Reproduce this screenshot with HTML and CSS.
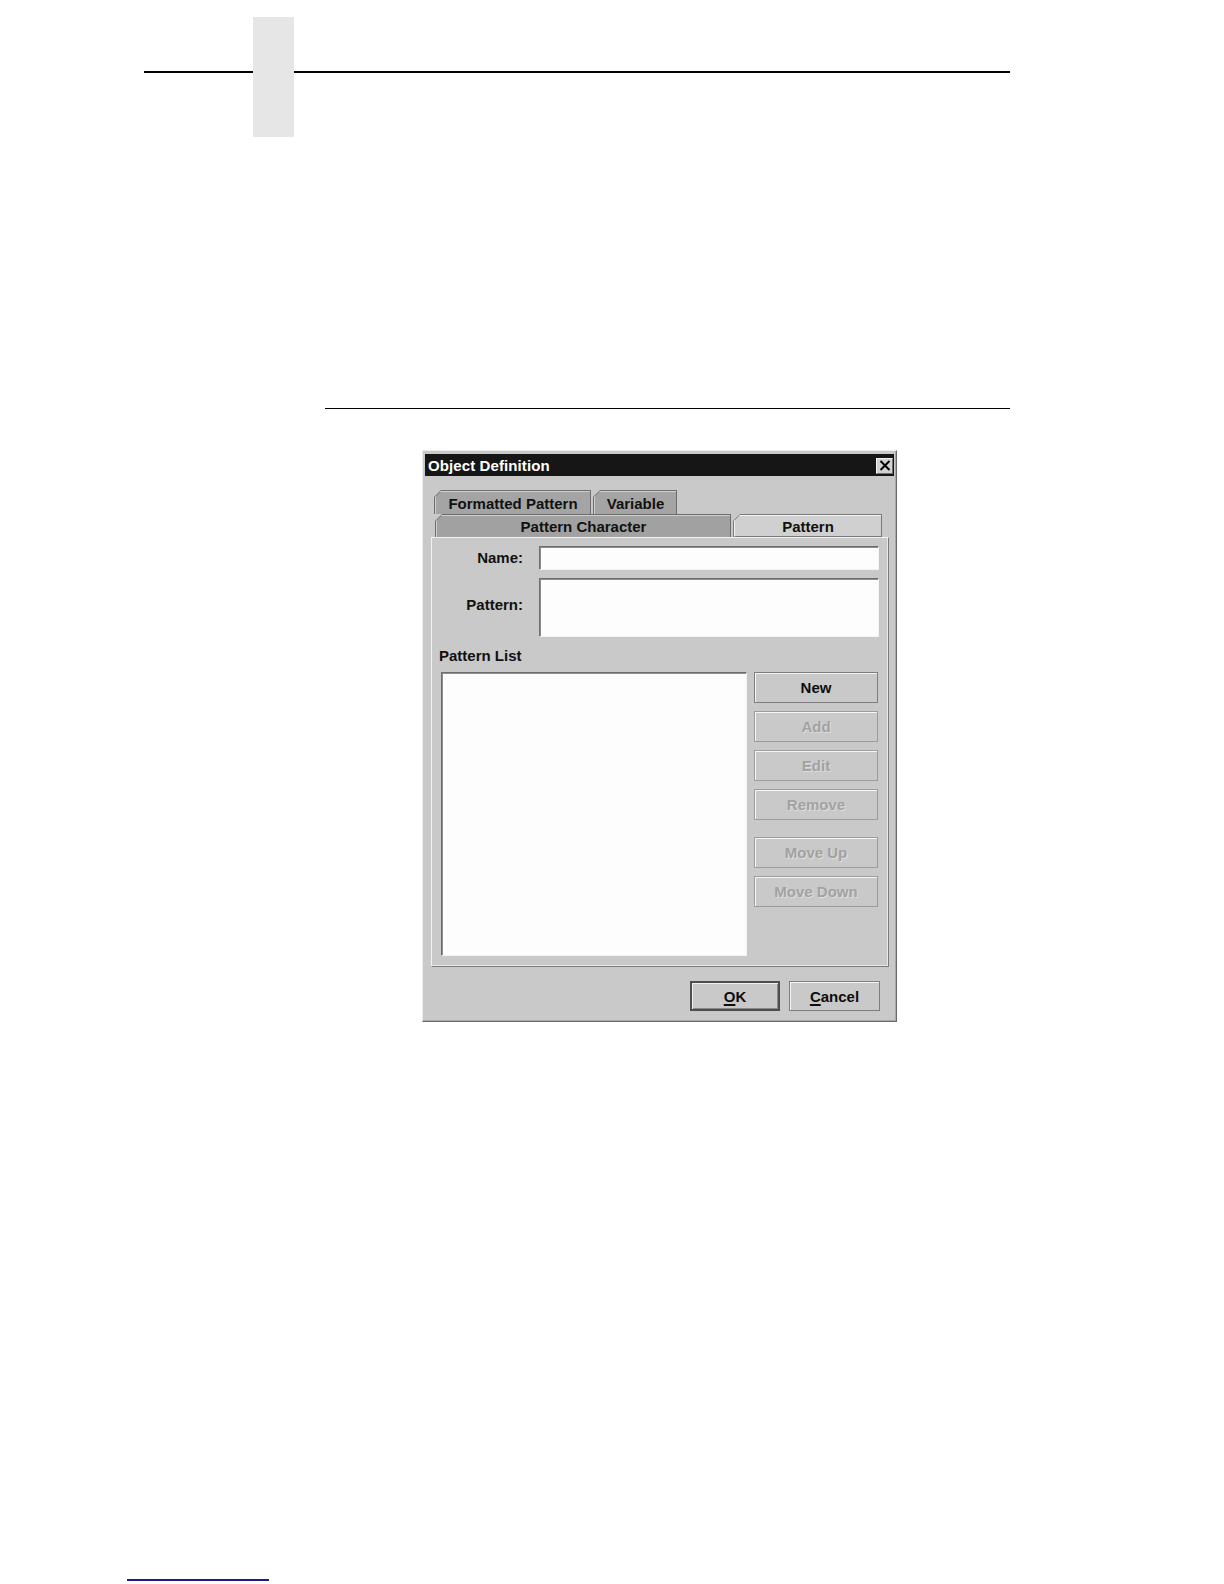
FILE: index.html
```html
<!DOCTYPE html>
<html>
<head>
<meta charset="utf-8">
<title>Object Definition</title>
<link rel="stylesheet" href="styles.css">
</head>
<body>
<div class="page">
  <div class="header">
    <div class="hl hl-left"></div>
    <div class="thumb"></div>
    <div class="hl hl-right"></div>
  </div>
  <div class="rule"></div>

  <div class="dialog">
    <div class="titlebar">
      <span class="title">Object Definition</span>
      <span class="close">
        <svg width="12" height="11" viewBox="0 0 12 11"><path d="M1.5 1 L10.5 10 M10.5 1 L1.5 10" stroke="#000" stroke-width="2" fill="none"/></svg>
      </span>
    </div>

    <div class="tabs">
      <div class="tabrow row1">
        <div class="tab back tab-fp"><div class="tab-in">Formatted Pattern</div></div>
        <div class="tab back tab-var"><div class="tab-in">Variable</div></div>
      </div>
      <div class="tabrow row2">
        <div class="tab back tab-pc"><div class="tab-in">Pattern Character</div></div>
        <div class="tab sel tab-pat"><div class="tab-in">Pattern</div></div>
      </div>
    </div>

    <div class="panel">
      <div class="form">
        <div class="lbl">Name:</div>
        <div class="field field-name"></div>
        <div class="lbl">Pattern:</div>
        <div class="field field-area"></div>
      </div>
      <div class="list-label">Pattern List</div>
      <div class="list-row">
        <div class="list"></div>
        <div class="btns">
          <div class="btn">New</div>
          <div class="btn disabled">Add</div>
          <div class="btn disabled">Edit</div>
          <div class="btn disabled">Remove</div>
          <div class="btn disabled spaced">Move Up</div>
          <div class="btn disabled">Move Down</div>
        </div>
      </div>
    </div>

    <div class="footer">
      <div class="btn fbtn default"><u>O</u>K</div>
      <div class="btn fbtn cancel"><u>C</u>ancel</div>
    </div>
  </div>

  <div class="footline"></div>
</div>
</body>
</html>
```

FILE: styles.css
```css
html, body {
  margin: 0;
  padding: 0;
  background: #ffffff;
}

.page {
  width: 1224px;
  height: 1584px;
  overflow: hidden;
  font-family: "Liberation Sans", Arial, sans-serif;
}

/* ---------- page header ---------- */
.header {
  display: flex;
  align-items: flex-start;
  padding-top: 17px;
  margin-left: 144px;
  width: 866px;
}
.hl {
  height: 2px;
  margin-top: 54px;
  background: #000;
}
.hl-left { width: 109px; }
.hl-right { flex: 1; }
.thumb {
  width: 41px;
  height: 120px;
  background: #e6e6e6;
}

.rule {
  margin-top: 271px;
  margin-left: 325px;
  width: 685px;
  height: 1px;
  background: #000;
}

/* ---------- dialog ---------- */
.dialog {
  box-sizing: border-box;
  margin-top: 41px;
  margin-left: 422px;
  width: 475px;
  height: 572px;
  padding: 3px 2px 0 2px;
  background: #c9c9c9;
  border: 1px solid;
  border-color: #ececec #6a6a6a #6a6a6a #ececec;
  box-shadow: inset -1px -1px 0 #a8a8a8;
  font-size: 15px;
  font-weight: bold;
  color: #111;
}

.titlebar {
  height: 22px;
  background: #161616;
  display: flex;
  align-items: center;
  justify-content: space-between;
  padding: 0 1px 0 3px;
}
.title {
  color: #ffffff;
  font-size: 15px;
  font-weight: bold;
  letter-spacing: 0.1px;
}
.close {
  box-sizing: border-box;
  width: 17px;
  height: 16px;
  margin-top: 1px;
  background: #d2d2d2;
  border: 1px solid;
  border-color: #f4f4f4 #707070 #707070 #f4f4f4;
  display: flex;
  align-items: center;
  justify-content: center;
}

/* ---------- tabs ---------- */
.tabs {
  margin-top: 14px;
}
.tabrow {
  display: flex;
  gap: 2px;
}
.row1 {
  margin-left: 9px;
  height: 24px;
}
.row2 {
  margin-left: 10px;
  height: 23px;
}
.tab {
  box-sizing: border-box;
  height: 100%;
  padding: 1px 1px 0 1px;
  background: #6c6c6c;
  clip-path: polygon(0 7px, 7px 0, 100% 0, 100% 100%, 0 100%);
}
.tab-in {
  box-sizing: border-box;
  height: 100%;
  display: flex;
  align-items: center;
  justify-content: center;
  clip-path: polygon(0 6px, 6px 0, 100% 0, 100% 100%, 0 100%);
  border-top: 1px solid #cfcfcf;
  border-left: 1px solid #cfcfcf;
  color: #111;
  white-space: nowrap;
}
.back .tab-in {
  background: #a4a4a4;
}
.tab-pc .tab-in {
  background: #a1a1a1;
}
.sel {
  background: #7a7a7a;
}
.sel .tab-in {
  background: #d0d0d0;
  border-top-color: #f4f4f4;
  border-left-color: #f4f4f4;
  border-bottom: 1px solid #7a7a7a;
}
.tab-fp  { width: 157px; }
.tab-var { width: 84px; }
.tab-pc  { width: 296px; }
.tab-pat { width: 149px; }

/* ---------- panel ---------- */
.panel {
  box-sizing: border-box;
  margin-left: 6px;
  width: 458px;
  height: 430px;
  padding: 8px 9px 10px 7px;
  border: 1px solid;
  border-color: #f2f2f2 #7a7a7a #7a7a7a #f2f2f2;
  box-shadow: inset -1px -1px 0 #e8e8e8;
}

.form {
  display: grid;
  grid-template-columns: 84px 1fr;
  grid-template-rows: 24px 59px;
  column-gap: 16px;
  row-gap: 8px;
}
.lbl {
  text-align: right;
  align-self: center;
  line-height: 18px;
}
.lbl:nth-of-type(3) {
  margin-top: -6px;
}
.field {
  box-sizing: border-box;
  background: #fdfdfd;
  border: 1px solid;
  border-color: #6e6e6e #f4f4f4 #f4f4f4 #6e6e6e;
  box-shadow: 1px 1px 0 #8e8e8e inset;
}

.list-label {
  margin-top: 10px;
  line-height: 18px;
  height: 18px;
}

.list-row {
  display: flex;
  gap: 7px;
  margin-top: 7px;
}
.list {
  box-sizing: border-box;
  margin-left: 2px;
  width: 306px;
  height: 284px;
  background: #fdfdfd;
  border: 1px solid;
  border-color: #6e6e6e #f4f4f4 #f4f4f4 #6e6e6e;
  box-shadow: 1px 1px 0 #8e8e8e inset;
}
.btns {
  display: flex;
  flex-direction: column;
  gap: 8px;
  width: 124px;
}

/* ---------- buttons ---------- */
.btn {
  box-sizing: border-box;
  height: 31px;
  display: flex;
  align-items: center;
  justify-content: center;
  background: #c9c9c9;
  border: 1px solid #7e7e7e;
  box-shadow: inset 1px 1px 0 #f6f6f6;
  color: #0e0e0e;
  white-space: nowrap;
}
.btn.disabled {
  color: #a2a2a2;
  border-color: #9c9c9c;
  text-shadow: 1px 1px 0 #dedede;
}
.btn.spaced {
  margin-top: 9px;
}

.footer {
  display: flex;
  justify-content: flex-end;
  gap: 9px;
  margin-top: 14px;
  padding-right: 14px;
}
.fbtn {
  height: 30px;
}
.fbtn u {
  text-decoration-thickness: 2px;
  text-underline-offset: 2px;
}
.default {
  width: 90px;
  border: 2px solid #4e4e4e;
  box-shadow: inset 1px 1px 0 #f0f0f0, inset -1px -1px 0 #8a8a8a;
}
.cancel {
  width: 91px;
}

/* ---------- footer line ---------- */
.footline {
  margin-top: 557px;
  margin-left: 127px;
  width: 142px;
  height: 2px;
  background: #1c1c8c;
}
```
